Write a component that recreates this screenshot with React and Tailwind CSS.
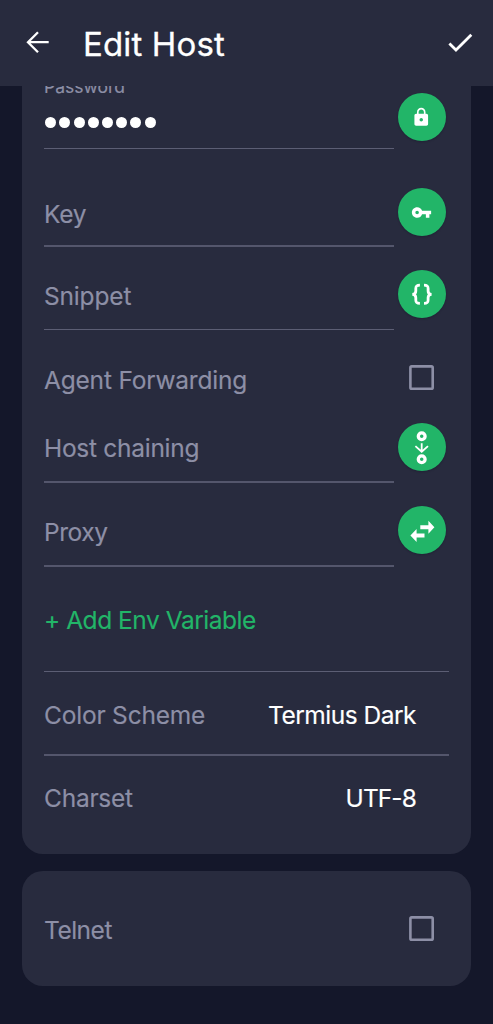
import React from 'react';
import { MdLock, MdVpnKey } from 'react-icons/md';

const LABEL = 'h-[30px] whitespace-nowrap text-[24.5px] leading-[30px]';

function BracesIcon() {
  return (
    <svg className="size-12" viewBox="0 0 48 48" fill="none" stroke="currentColor" strokeWidth="2.8" strokeLinecap="butt">
      <path d="M21.9 15.2C18.3 15.2 17.8 16.4 17.8 18.6V21C17.8 23.2 16.9 24.4 14.3 24.4C16.9 24.4 17.8 25.6 17.8 27.8V30C17.8 32.4 18.3 33.4 21.9 33.4" />
      <path d="M26 15.2C29.6 15.2 30.1 16.4 30.1 18.6V21C30.1 23.2 31 24.4 33.6 24.4C31 24.4 30.1 25.6 30.1 27.8V30C30.1 32.4 29.6 33.4 26 33.4" />
    </svg>
  );
}

function ChainIcon() {
  return (
    <svg className="size-12" viewBox="0 0 48 48" fill="none" stroke="currentColor">
      <circle cx="23.7" cy="13.2" r="3.4" strokeWidth="3.3" />
      <circle cx="23.7" cy="36.3" r="3.4" strokeWidth="3.3" />
      <path d="M23.7 20.2V28.7M17.4 23.1L23.7 28.7L30 23.1" strokeWidth="1.8" />
    </svg>
  );
}

function SwapIcon() {
  return (
    <svg className="size-12" viewBox="0 0 48 48" fill="currentColor">
      <path d="M22.3 19.2H30.4V14.8L36.4 21.3L30.4 27.8V23.3H22.3Z" />
      <path d="M26.5 27.4H18.6V22.9L12.4 29.4L18.6 36V31.5H26.5Z" />
    </svg>
  );
}

function RoundButton({ className, label, children }) {
  return (
    <button
      aria-label={label}
      className={`ml-[3.7px] flex size-12 shrink-0 items-center justify-center rounded-full bg-[#22b568] text-white shadow-[0_1px_2px_rgba(10,12,30,0.25)] ${className}`}
    >
      {children}
    </button>
  );
}

function Field({ height, line, labelClass, label, buttonClass, buttonLabel, icon }) {
  return (
    <div className={`flex ${height}`}>
      <div className={`w-[350px] ${line}`}>
        <div className={`${LABEL} ${labelClass}`}>{label}</div>
      </div>
      <RoundButton className={buttonClass} label={buttonLabel}>{icon}</RoundButton>
    </div>
  );
}

function Checkbox({ className }) {
  return (
    <svg role="checkbox" aria-checked="false" className={`size-[25px] shrink-0 ${className}`} viewBox="0 0 25 25" fill="none">
      <rect x="1.4" y="1.4" width="22.3" height="22.3" rx="1.3" stroke="#8d8fa6" strokeWidth="2.6" />
    </svg>
  );
}

export default function App() {
  return (
    <div className="flex h-[1024px] w-[493px] flex-col overflow-hidden bg-[#14172a] font-['Inter',sans-serif] text-[#8d8fa6] [-webkit-text-stroke:0.15px]">
      <header className="flex h-[86px] shrink-0 items-start bg-[#282b3e] text-white">
        <svg className="mt-[30px] ml-[25px] h-6 w-[26px]" viewBox="0 0 26 24" fill="none" stroke="currentColor" strokeWidth="2.3">
          <path d="M23.7 12.2H3.2M13 2.2L3 12.2L13 22.2" />
        </svg>
        <h1 className="mt-[24px] ml-[32px] whitespace-nowrap text-[33px] leading-10 tracking-[0.15px] [-webkit-text-stroke:0.3px]">Edit Host</h1>
        <svg className="mt-[30px] mr-[19px] ml-auto h-6 w-[26px]" viewBox="0 0 26 24" fill="none" stroke="currentColor" strokeWidth="2.8">
          <path d="M1.4 13.4L8 20L23.3 4.8" />
        </svg>
      </header>

      <main className="flex flex-col gap-[17px] px-[22px]">
        <section className="h-[768px] rounded-b-[21px] bg-[#282b3e] pl-[22px]">
          <div className="flex h-[63px] overflow-hidden">
            <div className="w-[350px] border-b border-[#5c5e74]">
              <div className="-mt-[9px] h-5 text-[17.5px] leading-5">Password</div>
              <div className="mt-[20px] ml-[1.2px] flex gap-[3.2px]">
                {Array.from({ length: 8 }, (_, i) => (
                  <span key={i} className="size-[11px] rounded-full bg-white" />
                ))}
              </div>
            </div>
            <RoundButton className="mt-[7px]" label="Password"><MdLock className="size-[20.5px]" /></RoundButton>
          </div>
          <Field height="h-[98px]" line="border-b-2 border-[#54566c]" labelClass="pt-[50px] tracking-[-0.3px]" label="Key"
            buttonClass="mt-[39px]" buttonLabel="Key" icon={<MdVpnKey className="size-[21px]" />} />
          <Field height="h-[83px]" line="border-b border-[#5c5e74]" labelClass="pt-[34px] tracking-[-0.17px]" label="Snippet"
            buttonClass="mt-[23px]" buttonLabel="Snippet" icon={<BracesIcon />} />
          <div className="flex h-[70px] justify-between pr-[37px]">
            <div className={`${LABEL} pt-[35px] tracking-[-0.2px]`}>Agent Forwarding</div>
            <Checkbox className="mt-[34.5px]" />
          </div>
          <Field height="h-[83px]" line="border-b-2 border-[#54566c]" labelClass="pt-[33px] tracking-[-0.28px]" label="Host chaining"
            buttonClass="mt-[23px]" buttonLabel="Host chaining" icon={<ChainIcon />} />
          <Field height="h-[84px]" line="border-b-2 border-[#54566c]" labelClass="pt-[34px] tracking-[-0.45px]" label="Proxy"
            buttonClass="mt-[23px]" buttonLabel="Proxy" icon={<SwapIcon />} />
          <div className="mr-[22px] h-[105px] border-b border-[#5c5e74] text-[#22b568]">
            <div className={`${LABEL} pt-[38px] tracking-[-0.47px]`}>+ Add Env Variable</div>
          </div>
          <div className="mr-[22px] flex h-[84px] justify-between border-b-2 border-[#54566c] pr-[33px]">
            <div className={`${LABEL} pt-[28px] tracking-[-0.2px]`}>Color Scheme</div>
            <div className={`${LABEL} pt-[28px] tracking-[-0.5px] text-white`}>Termius Dark</div>
          </div>
          <div className="mr-[22px] flex justify-between pr-[33px]">
            <div className={`${LABEL} pt-[27px] tracking-[-0.25px]`}>Charset</div>
            <div className={`${LABEL} pt-[27px] tracking-[-0.9px] text-white`}>UTF-8</div>
          </div>
        </section>

        <section className="flex h-[115px] justify-between rounded-[21px] bg-[#282b3e] pr-[37px] pl-[22px]">
          <div className={`${LABEL} pt-[44px] tracking-[-0.5px]`}>Telnet</div>
          <Checkbox className="mt-[45px]" />
        </section>
      </main>
    </div>
  );
}
